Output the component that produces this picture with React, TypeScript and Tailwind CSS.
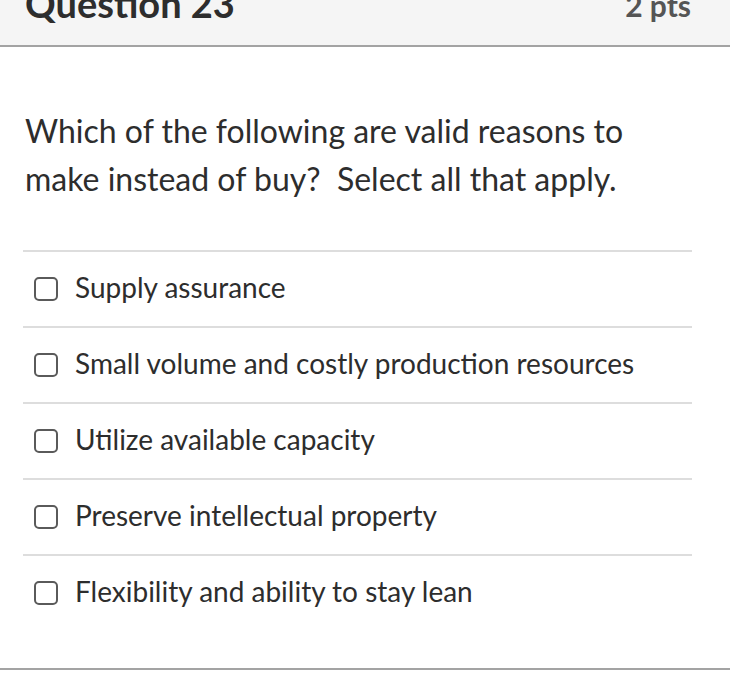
import React from "react";

const options = [
  "Supply assurance",
  "Small volume and costly production resources",
  "Utilize available capacity",
  "Preserve intellectual property",
  "Flexibility and ability to stay lean",
];

export default function App() {
  return (
    <div
      className="w-[730px] h-[682px] bg-white overflow-hidden"
      style={{ fontFamily: "Lato, 'Open Sans', sans-serif" }}
    >
      <div className="h-[47px] bg-[#f5f5f5] border-b-2 border-[#a3a3a3] flex justify-between items-start px-[25px] overflow-hidden">
        <div className="mt-[-19px] text-[38px] leading-[44px] font-bold text-[#2d2d2d]">Question 23</div>
        <div className="mt-[-13px] mr-[14px] text-[30px] leading-[36px] font-bold text-[#555]">2 pts</div>
      </div>
      <div className="h-[623px] border-b-2 border-[#a3a3a3]">
        <div className="px-[25px] pt-[60px] text-[32px] leading-[48px] text-[#2d2d2d]">
          <div>Which of the following are valid reasons to</div>
          <div>make instead of buy?&nbsp; Select all that apply.</div>
        </div>
        <div className="mt-[47px] ml-[23px] w-[669px]">
          {options.map((o) => (
            <div key={o} className="h-[76px] border-t-2 border-[#dddddd] flex items-center pl-[11px] pb-[5px]">
              <div className="w-[24px] h-[24px] border-2 border-[#5a5a5a] rounded-[5px] shrink-0 mt-[5px]"></div>
              <div className="ml-[17px] text-[28px] leading-[34px] text-[#2d2d2d]">{o}</div>
            </div>
          ))}
        </div>
      </div>
    </div>
  );
}
